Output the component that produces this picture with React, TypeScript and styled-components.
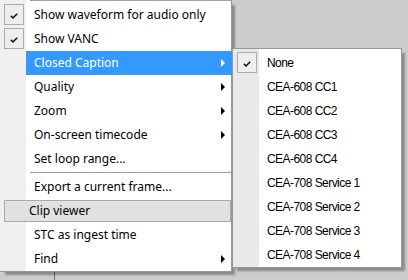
import React from 'react';
import styled, { createGlobalStyle } from 'styled-components';

const GlobalStyle = createGlobalStyle`
  html, body {
    margin: 0;
    padding: 0;
    background: #cccccc;
  }
  body {
    font-family: 'Noto Sans', 'Liberation Sans', sans-serif;
    font-size: 12px;
    color: #000;
  }
`;

const Desktop = styled.div`
  position: relative;
  width: 408px;
  height: 280px;
  overflow: hidden;
  background: #cccccc;
  padding-left: 54px;
  box-sizing: border-box;
`;

const BackPane = styled.div`
  height: 100%;
  border-left: 1px solid #6f6f6f;
`;

const Menu = styled.div<{ left: number; top: number; width: number; sub?: boolean }>`
  position: absolute;
  left: ${(p) => p.left}px;
  top: ${(p) => p.top}px;
  width: ${(p) => p.width}px;
  box-sizing: border-box;
  display: flex;
  flex-direction: column;
  background: linear-gradient(
    to right,
    ${(p) => (p.sub ? '#e9e9e9' : '#f0f0f0')} 0,
    ${(p) => (p.sub ? '#e9e9e9' : '#f0f0f0')} 26px,
    #ffffff 26px
  );
  border: 1px solid #979797;
  border-left-width: ${(p) => (p.sub ? 1 : 0)}px;
  border-top-width: ${(p) => (p.sub ? 1 : 0)}px;
  padding: ${(p) => (p.sub ? '2px 0 0' : '0')};
  box-shadow: 4px 4px 2px -1px rgba(0, 0, 0, 0.32);
  font-family: ${(p) =>
    p.sub ? "'Liberation Sans', Arial, sans-serif" : "'Noto Sans', 'Liberation Sans', sans-serif"};
  letter-spacing: ${(p) => (p.sub ? '-0.55px' : 'normal')};
`;

const Separator = styled.div<{ first?: boolean }>`
  height: 4px;
  margin-top: ${(p) => (p.first ? -1 : 0)}px;
  padding-left: 30px;
  box-sizing: border-box;
  &::after {
    content: '';
    display: block;
    margin-top: 1px;
    height: 1px;
    background: #a0a0a0;
  }
`;

const Item = styled.div`
  display: flex;
  height: 24px;
`;

const Gutter = styled.div`
  width: 26px;
  flex: none;
  padding: 1px 0 0 4px;
  box-sizing: border-box;
`;

const CheckBox = styled.div`
  width: 20px;
  height: 21px;
  box-sizing: border-box;
  border: 1px solid #adadad;
  background-color: #f5f5f5;
  background-image: radial-gradient(#e4e4e4 0.6px, transparent 0.8px);
  background-size: 2px 2px;
  display: flex;
  align-items: center;
  justify-content: center;
  padding-top: 2px;
`;

const Body = styled.div<{ active?: boolean }>`
  flex: 1;
  display: flex;
  align-items: center;
  padding: 0 3px 1px 8px;
  margin-right: ${(p) => (p.active ? -1 : 0)}px;
  background: ${(p) => (p.active ? '#3399ff' : 'transparent')};
  color: ${(p) => (p.active ? '#ffffff' : '#000000')};
  white-space: nowrap;
`;

const Label = styled.span`
  flex: 1;
`;

const Arrow = styled.span<{ active?: boolean }>`
  width: 0;
  height: 0;
  border-top: 4px solid transparent;
  border-bottom: 4px solid transparent;
  border-left: 4px solid ${(p) => (p.active ? '#ffffff' : '#000000')};
  margin-right: ${(p) => (p.active ? 4 : 3)}px;
`;

const ClipRow = styled.div`
  height: 22px;
  margin: 1px 0 1px 4px;
  box-sizing: border-box;
  border: 1px solid #a9a9a9;
  background: #e1e1e1;
  display: flex;
  align-items: center;
  padding: 0 0 1px 24px;
`;

function Check(): JSX.Element {
  return (
    <svg width="8" height="6" viewBox="0 0 8 6">
      <path d="M0.8 2.8 L3 5 L7.2 0.8" fill="none" stroke="#000" strokeWidth="1.4" />
    </svg>
  );
}

interface RowProps {
  label: string;
  checked?: boolean;
  submenu?: boolean;
  active?: boolean;
}

function Row({ label, checked, submenu, active }: RowProps): JSX.Element {
  return (
    <Item>
      <Gutter>{checked && (<CheckBox><Check /></CheckBox>)}</Gutter>
      <Body active={active}>
        <Label>{label}</Label>
        {submenu && <Arrow active={active} />}
      </Body>
    </Item>
  );
}

const CAPTIONS = [
  'None',
  'CEA-608 CC1',
  'CEA-608 CC2',
  'CEA-608 CC3',
  'CEA-608 CC4',
  'CEA-708 Service 1',
  'CEA-708 Service 2',
  'CEA-708 Service 3',
  'CEA-708 Service 4',
];

export default function App(): JSX.Element {
  return (
    <>
      <GlobalStyle />
      <Desktop>
        <BackPane />
        <Menu left={0} top={0} width={232}>
          <Separator first />
          <Row label="Show waveform for audio only" checked />
          <Row label="Show VANC" checked />
          <Row label="Closed Caption" submenu active />
          <Row label="Quality" submenu />
          <Row label="Zoom" submenu />
          <Row label="On-screen timecode" submenu />
          <Row label="Set loop range..." />
          <Separator />
          <Row label="Export a current frame..." />
          <ClipRow>Clip viewer</ClipRow>
          <Row label="STC as ingest time" />
          <Row label="Find" submenu />
        </Menu>
        <Menu left={232} top={48} width={170} sub>
          {CAPTIONS.map((c, i) => (
            <Row key={c} label={c} checked={i === 0} />
          ))}
        </Menu>
      </Desktop>
    </>
  );
}
